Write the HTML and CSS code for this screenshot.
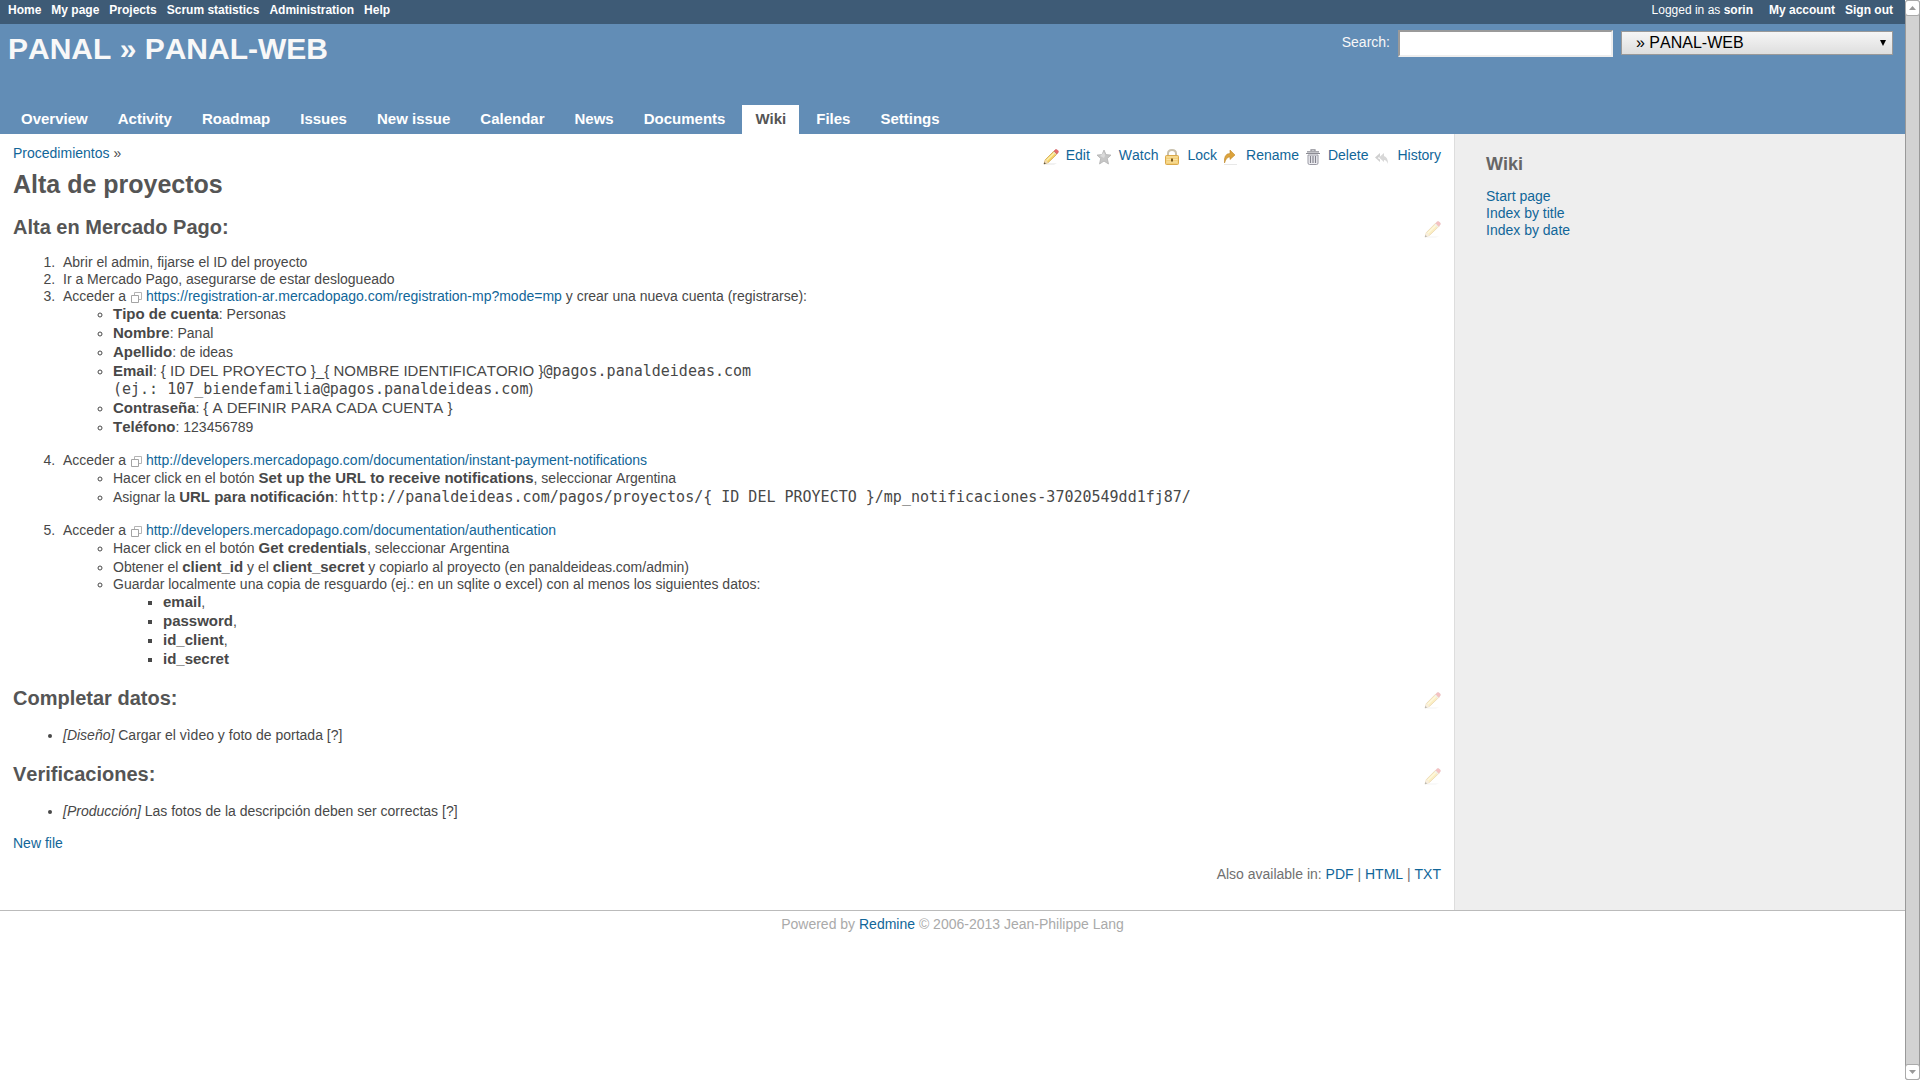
FILE: index.html
```html
<!DOCTYPE html>
<html lang="es">

<head>
    <meta charset="UTF-8">
    <meta name="viewport" content="width=device-width, initial-scale=1.0">
    <title>Alta de proyectos - PANAL-WEB - Redmine</title>
    <link rel="stylesheet" href="styles.css">
</head>

<body>
    <!-- shared icons -->
    <svg class="sprite" aria-hidden="true">
        <symbol id="ico-pencil" viewBox="0 0 16 16">
            <path d="M1 15.500h10l3-1H4z" fill="#e4e4e4" />
            <path d="M1 15l1.300-4.200L11 2l3 3-8.800 8.500z" fill="#f6d56a" stroke="#cf9f45" stroke-width=".8" />
            <path d="M3.500 11.500L12 3.200" stroke="#fdf0ae" stroke-width="1.400" />
            <path d="M11 2l1.500-1.400q.9-.5 1.800.3l.9 1q.6.900-.1 1.700L14 5z" fill="#e8686a" stroke="#c9585a" stroke-width=".5" />
            <path d="M10.300 2.700l3 3" stroke="#d8d8d8" stroke-width="1" />
            <path d="M1 15l1.300-4.200 2.900 2.700z" fill="#eed9b4" />
            <path d="M.8 15.200l.6-2 1.400 1.300z" fill="#444" />
        </symbol>
        <symbol id="ico-copy" viewBox="0 0 11 11">
            <path d="M3.500 .5h7v7h-7z" fill="#fff" stroke="#b4b4b4" />
            <path d="M.5 3.500h7v7h-7z" fill="#fff" stroke="#a4a4a4" />
        </symbol>
    </svg>

    <div id="wrapper">
        <div id="top-menu">
            <ul>
                <li><a href="#">Home</a></li>
                <li><a href="#">My page</a></li>
                <li><a href="#">Projects</a></li>
                <li><a href="#">Scrum statistics</a></li>
                <li><a href="#">Administration</a></li>
                <li><a href="#">Help</a></li>
            </ul>
            <div id="account">
                <div id="loggedas">Logged in as <a href="#">sorin</a></div>
                <ul>
                    <li><a href="#">My account</a></li>
                    <li><a href="#">Sign out</a></li>
                </ul>
            </div>
        </div>

        <div id="header">
            <div class="header-row">
                <h1>PANAL » PANAL-WEB</h1>
                <form id="quick-search">
                    <label for="q"><a href="#">Search</a>:</label>
                    <input id="q" name="q" type="text">
                    <div class="jump">
                        <select name="project" aria-label="Jump to a project">
                            <option>» PANAL-WEB</option>
                        </select>
                    </div>
                </form>
            </div>
            <ul id="main-menu">
                <li><a href="#">Overview</a></li>
                <li><a href="#">Activity</a></li>
                <li><a href="#">Roadmap</a></li>
                <li><a href="#">Issues</a></li>
                <li><a href="#">New issue</a></li>
                <li><a href="#">Calendar</a></li>
                <li><a href="#">News</a></li>
                <li><a href="#">Documents</a></li>
                <li><a href="#" class="selected">Wiki</a></li>
                <li><a href="#">Files</a></li>
                <li><a href="#">Settings</a></li>
            </ul>
        </div>

        <div id="main">
            <div id="content">
                <div class="title-bar">
                    <div class="breadcrumb"><a href="#">Procedimientos</a> »</div>
                    <div class="contextual">
                        <a href="#"><svg><use href="#ico-pencil" /></svg>Edit</a>
                        <a href="#"><svg viewBox="0 0 16 16">
                                <path d="M8 1l2 4.600 5 .5-3.700 3.400L12.500 15 8 12.100 3.500 15l1.200-5.500L1 6.100l5-.5z" fill="#c6c6c6" stroke="#b2b2b2" stroke-width=".8" />
                                <path d="M8 3l1.200 3.400L8 9 4 7z" fill="#dadada" />
                            </svg>Watch</a>
                        <a href="#"><svg viewBox="0 0 16 16">
                                <path d="M4 7V4.500Q4 1 8 1t4 3.500V7" fill="none" stroke="#c9c1ad" stroke-width="2" />
                                <rect x="1.500" y="6.500" width="13" height="9" rx="1" fill="#f3cf78" stroke="#dba94a" />
                                <path d="M2.500 8h11M2.500 10.500h11M2.500 13h11" stroke="#f9e2a6" />
                                <path d="M7 9.500h2v3H7z" fill="#7d5a1c" />
                            </svg>Lock</a>
                        <a href="#"><svg viewBox="0 0 16 16">
                                <path d="M1 15.500h13" stroke="#e8e8e8" />
                                <path d="M1.500 14Q.5 4.500 7 4.500V1l5 5-5 4.500V8Q3.500 7.500 1.500 14z" fill="#dca33c" stroke="#c08a2e" stroke-width=".6" />
                            </svg>Rename</a>
                        <a href="#"><svg viewBox="0 0 16 16">
                                <path d="M1 4.500h14M2 2.800h12M6 2V.8h4V2" fill="none" stroke="#8c8c94" stroke-width="1.200" />
                                <path d="M3 6v8q0 1.500 1.500 1.500h7Q13 15.500 13 14V6z" fill="#eeeef2" stroke="#9a9aa4" />
                                <path d="M5.500 7v7M8 7v7M10.500 7v7" stroke="#83838d" stroke-width="1.200" />
                            </svg>Delete</a>
                        <a href="#"><svg viewBox="0 0 16 16">
                                <path d="M6 4v3.500L3.500 9 6 10.500V13L1 8.500z" fill="#cfcfcf" />
                                <path d="M10 4v3q4 1 4 8-1.500-4-4-4v2L5 8.500z" fill="#d8d8d8" />
                            </svg>History</a>
                    </div>
                </div>

                <div class="wiki">
                    <h2>Alta de proyectos</h2>

                    <h3>Alta en Mercado Pago: <a href="#" class="edit-section" aria-label="Edit this section"><svg><use href="#ico-pencil" /></svg></a></h3>
                    <ol>
                        <li>Abrir el admin, fijarse el ID del proyecto</li>
                        <li>Ir a Mercado Pago, asegurarse de estar deslogueado</li>
                        <li>Acceder a <a class="external" href="#"><svg><use href="#ico-copy" /></svg>https://registration-ar.mercadopago.com/registration-mp?mode=mp</a> y crear una nueva cuenta (registrarse):
                            <ul>
                                <li><strong>Tipo de cuenta</strong>: Personas</li>
                                <li><strong>Nombre</strong>: Panal</li>
                                <li><strong>Apellido</strong>: de ideas</li>
                                <li><strong>Email</strong>: <var>{ ID DEL PROYECTO }_{ NOMBRE IDENTIFICATORIO }</var><code>@pagos.panaldeideas.com</code><br><code>(ej.: 107_biendefamilia@pagos.panaldeideas.com</code>)</li>
                                <li><strong>Contraseña</strong>: <var>{ A DEFINIR PARA CADA CUENTA }</var></li>
                                <li><strong>Teléfono</strong>: 123456789</li>
                            </ul>
                        </li>
                        <li>Acceder a <a class="external" href="#"><svg><use href="#ico-copy" /></svg>http://developers.mercadopago.com/documentation/instant-payment-notifications</a>
                            <ul>
                                <li>Hacer click en el botón <strong>Set up the URL to receive notifications</strong>, seleccionar Argentina</li>
                                <li>Asignar la <strong>URL para notificación</strong>: <code>http://panaldeideas.com/pagos/proyectos/{ ID DEL PROYECTO }/mp_notificaciones-37020549dd1fj87/</code></li>
                            </ul>
                        </li>
                        <li>Acceder a <a class="external" href="#"><svg><use href="#ico-copy" /></svg>http://developers.mercadopago.com/documentation/authentication</a>
                            <ul>
                                <li>Hacer click en el botón <strong>Get credentials</strong>, seleccionar Argentina</li>
                                <li>Obtener el <strong>client_id</strong> y el <strong>client_secret</strong> y copiarlo al proyecto (en panaldeideas.com/admin)</li>
                                <li>Guardar localmente una copia de resguardo (ej.: en un sqlite o excel) con al menos los siguientes datos:
                                    <ul>
                                        <li><strong>email</strong>,</li>
                                        <li><strong>password</strong>,</li>
                                        <li><strong>id_client</strong>,</li>
                                        <li><strong>id_secret</strong></li>
                                    </ul>
                                </li>
                            </ul>
                        </li>
                    </ol>

                    <h3>Completar datos: <a href="#" class="edit-section" aria-label="Edit this section"><svg><use href="#ico-pencil" /></svg></a></h3>
                    <ul>
                        <li><em>[Diseño]</em> Cargar el vìdeo y foto de portada [?]</li>
                    </ul>

                    <h3>Verificaciones: <a href="#" class="edit-section" aria-label="Edit this section"><svg><use href="#ico-pencil" /></svg></a></h3>
                    <ul>
                        <li><em>[Producción]</em> Las fotos de la descripción deben ser correctas [?]</li>
                    </ul>
                </div>

                <p class="new-file"><a href="#">New file</a></p>
                <p class="other-formats">Also available in: <a href="#">PDF</a> | <a href="#">HTML</a> | <a href="#">TXT</a></p>
            </div>

            <div id="sidebar">
                <h3>Wiki</h3>
                <a href="#">Start page</a>
                <a href="#">Index by title</a>
                <a href="#">Index by date</a>
            </div>
        </div>

        <div id="footer">Powered by <a href="#">Redmine</a> © 2006-2013 Jean-Philippe Lang</div>
    </div>

    <div class="scrollbar" aria-hidden="true">
        <span class="scroll-btn"><svg viewBox="0 0 7 4"><path d="M3.500 0L7 4H0z" fill="#999" /></svg></span>
        <span class="scroll-btn"><svg viewBox="0 0 7 4"><path d="M0 0h7L3.500 4z" fill="#999" /></svg></span>
    </div>
</body>

</html>
```
FILE: styles.css
```css
body {
    margin: 0;
    display: grid;
    grid-template-columns: 1fr 15px;
    min-height: 100vh;
    background: #fff;
    color: #484848;
    font-family: "Liberation Sans", Arial, sans-serif;
    font-size: 14px;
    font-kerning: none;
    line-height: 17px;
}

a {
    color: #169;
    text-decoration: none;
}

a:hover {
    text-decoration: underline;
}

ul,
ol {
    margin: 0;
    padding: 0;
}

.sprite {
    position: absolute;
    width: 0;
    height: 0;
}

/* top menu */
#top-menu {
    display: flex;
    justify-content: space-between;
    height: 20px;
    padding: 2px 12px 2px 8px;
    background: #3e5b76;
    color: #fff;
    font-size: 12px;
    line-height: 16px;
}

#top-menu ul {
    display: flex;
    gap: 10px;
    list-style: none;
}

#top-menu a {
    color: #fff;
    font-weight: bold;
}

#account {
    display: flex;
    gap: 16px;
}

/* header */
#header {
    display: flex;
    flex-direction: column;
    justify-content: space-between;
    height: 110px;
    background: #628db6;
    color: #f8f8f8;
}

.header-row {
    display: flex;
    justify-content: space-between;
    align-items: flex-start;
    padding: 6px 12px 0 8px;
}

#header h1 {
    margin: 0;
    font-size: 30px;
    line-height: 38px;
}

#header label a {
    color: #f8f8f8;
}

#quick-search {
    display: flex;
    align-items: flex-start;
    gap: 8px;
}

#quick-search label {
    line-height: 24px;
}

#quick-search input {
    box-sizing: border-box;
    width: 215px;
    height: 27px;
    border: 2px inset #eee;
    background: #fff;
    font-size: 16px;
}

.jump {
    display: grid;
    align-items: center;
    width: 272px;
    margin-top: 1px;
}

.jump select {
    grid-area: 1 / 1;
    appearance: none;
    height: 24px;
    padding: 0 14px 2px;
    border: 1px solid #999;
    border-radius: 0;
    background: linear-gradient(#f6f6f6, #dedede);
    color: #000;
    font-family: inherit;
    font-size: 16px;
    font-kerning: none;
}

.jump::after {
    content: "";
    grid-area: 1 / 1;
    justify-self: end;
    margin-right: 7px;
    border: 3px solid transparent;
    border-top: 6px solid #000;
    border-bottom: 0;
    pointer-events: none;
}

#main-menu {
    display: flex;
    gap: 4px;
    padding-left: 8px;
    list-style: none;
}

#main-menu a {
    display: block;
    padding: 5px 13px 6px;
    color: #fff;
    font-size: 15px;
    font-weight: bold;
    line-height: 18px;
}

#main-menu a.selected {
    background: #fff;
    color: #555;
}

/* content */
#main {
    display: grid;
    grid-template-columns: 1fr 451px;
    border-bottom: 1px solid #bbb;
}

#content {
    padding: 11px 13px 27px;
}

.title-bar {
    display: flex;
    justify-content: space-between;
}

.contextual {
    display: flex;
    gap: 6px;
    height: 23px;
    padding-top: 2px;
}

.contextual a {
    display: flex;
    gap: 7px;
}

.contextual svg {
    width: 16px;
    height: 16px;
    margin-top: 2px;
}

h2,
h3 {
    color: #555;
}

.wiki h2 {
    margin: 0 0 16px;
    font-size: 25px;
    line-height: 29px;
}

.wiki h3 {
    display: flex;
    justify-content: space-between;
    margin: 18px 0 15px;
    font-size: 20px;
    line-height: 24px;
}

.wiki h2 + h3 {
    margin-top: 16px;
}

.edit-section {
    opacity: 0.4;
}

.edit-section svg {
    display: block;
    width: 17px;
    height: 17px;
    margin-top: 6px;
}

.wiki ul {
    padding-left: 50px;
}

.wiki > ul {
    margin-top: 17px;
}

.wiki ol {
    padding-left: 46px;
}

.wiki ol > li {
    padding-left: 4px;
}

.wiki li > ul {
    margin: -1px 0 16px;
}

.wiki li:last-child > ul {
    margin-bottom: 0;
}

.wiki strong,
.wiki var {
    font-size: 15px;
    line-height: 19px;
}

.wiki var {
    font-style: normal;
}

.wiki code {
    font-family: "DejaVu Sans Mono", monospace;
    font-size: 15px;
    line-height: 18px;
}

.external svg {
    width: 11px;
    height: 11px;
    margin: 0 4px 0 1px;
    vertical-align: -2px;
}

.new-file {
    margin: 15px 0 14px;
}

.other-formats {
    margin: 0;
    color: #707070;
    text-align: right;
}

/* sidebar */
#sidebar {
    display: flex;
    flex-direction: column;
    align-items: flex-start;
    box-sizing: border-box;
    padding: 20px 31px;
    border-left: 1px solid #ddd;
    background: #eee;
}

#sidebar h3 {
    margin: 0 0 13px;
    color: #666;
    font-size: 18px;
    line-height: 21px;
}

#footer {
    padding: 5px;
    color: #aaa;
    text-align: center;
}

/* scrollbar column */
.scrollbar {
    display: flex;
    flex-direction: column;
    justify-content: space-between;
    box-sizing: border-box;
    border: 1px solid #999;
    border-radius: 3px;
    background: #d2d2d2;
}

.scroll-btn {
    display: grid;
    place-items: center;
    height: 14px;
    border-radius: 2px;
    background: #fff;
    box-shadow: 0 0 0 1px #aaa;
}

.scroll-btn svg {
    width: 7px;
    height: 4px;
}
```
